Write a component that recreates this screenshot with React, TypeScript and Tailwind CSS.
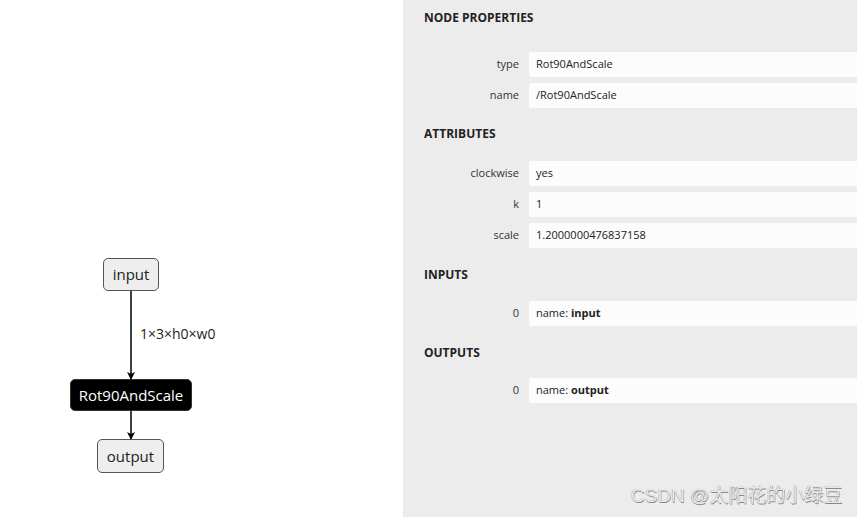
import React from "react";

const font = { fontFamily: '"Open Sans", "Noto Sans", Arial, sans-serif' };

function Row({ label, children }: { label: string; children: React.ReactNode }) {
  return (
    <div className="flex items-center h-[25px]">
      <div className="w-[116px] text-right text-[11px] text-[#333] pr-0">{label}</div>
      <div className="ml-[10px] flex-1 h-full bg-[#fcfcfc] flex items-center pl-[7px] text-[11px] text-[#222] rounded-l-[2px]">
        {children}
      </div>
    </div>
  );
}

function Heading({ children, className }: { children: React.ReactNode; className?: string }) {
  return (
    <div className={"h-[20px] leading-[20px] pl-[21px] text-[12px] font-bold text-[#222] " + (className ?? "")}>
      {children}
    </div>
  );
}

function Node({ label, dark, className }: { label: string; dark?: boolean; className: string }) {
  return (
    <div
      className={
        "absolute flex items-center justify-center rounded-[5px] text-[15px] " +
        (dark
          ? "bg-black text-white border border-[#333] "
          : "bg-[#eeeeee] text-[#222] border-[1.5px] border-[#555] ") +
        className
      }
    >
      {label}
    </div>
  );
}

export default function App() {
  return (
    <div className="w-[857px] h-[517px] flex bg-white overflow-hidden relative" style={font}>
      <div className="w-[403px] h-full relative">
        <svg className="absolute left-0 top-0" width="403" height="517">
          <defs>
            <marker id="arr" markerWidth="8" markerHeight="8" refX="7" refY="4" orient="auto" markerUnits="userSpaceOnUse">
              <path d="M0,0 L8,4 L0,8 L2,4 Z" fill="#000" />
            </marker>
          </defs>
          <line x1="131" y1="291" x2="131" y2="379" stroke="#000" strokeWidth="1.5" markerEnd="url(#arr)" />
          <line x1="131" y1="411" x2="131" y2="439" stroke="#000" strokeWidth="1.5" markerEnd="url(#arr)" />
        </svg>
        <Node label="input" className="left-[103px] top-[258px] w-[56px] h-[33px]" />
        <div className="absolute left-[140px] top-[324px] text-[14px] text-[#222] leading-[20px]">1×3×h0×w0</div>
        <Node label="Rot90AndScale" dark className="left-[70px] top-[379px] w-[122px] h-[32px]" />
        <Node label="output" className="left-[97px] top-[439px] w-[67px] h-[34px]" />
      </div>
      <div className="flex-1 h-full bg-[#ececec] flex flex-col pt-[8px]">
        <Heading>NODE PROPERTIES</Heading>
        <div className="mt-[24px] flex flex-col gap-[6px]">
          <Row label="type">Rot90AndScale</Row>
          <Row label="name">/Rot90AndScale</Row>
        </div>
        <Heading className="mt-[16px]">ATTRIBUTES</Heading>
        <div className="mt-[17px] flex flex-col gap-[6px]">
          <Row label="clockwise">yes</Row>
          <Row label="k">1</Row>
          <Row label="scale">1.2000000476837158</Row>
        </div>
        <Heading className="mt-[17px]">INPUTS</Heading>
        <div className="mt-[16px]">
          <Row label="0">
            <span>name:&nbsp;</span>
            <span className="font-bold">input</span>
          </Row>
        </div>
        <Heading className="mt-[17px]">OUTPUTS</Heading>
        <div className="mt-[15px]">
          <Row label="0">
            <span>name:&nbsp;</span>
            <span className="font-bold">output</span>
          </Row>
        </div>
      </div>
      <div
        className="absolute left-[631px] top-[483px] text-[19px] text-[#e8e8e8] leading-[26px]"
        style={{
          fontFamily: '"Liberation Sans", "Noto Sans CJK SC", sans-serif',
          textShadow: "0.5px 0.5px 0 #888, -0.5px -0.5px 0 #aaa",
        }}
      >
        CSDN @太阳花的小绿豆
      </div>
    </div>
  );
}
